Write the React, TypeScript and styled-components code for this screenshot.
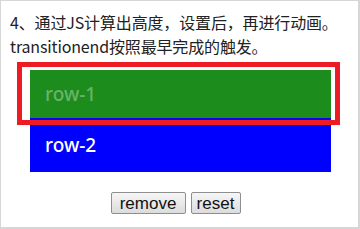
import { createGlobalStyle } from 'styled-components';
import styled from 'styled-components';

const GlobalStyle = createGlobalStyle`
  html, body {
    margin: 0;
    padding: 0;
    background: #fff;
  }
`;

const Page = styled.div`
  position: relative;
  box-sizing: border-box;
  width: 360px;
  height: 229px;
  border: 1px solid #d6d6d6;
  border-width: 1px 2px 2px 1px;
  font-family: "Noto Sans CJK SC", "Noto Sans", sans-serif;
`;

const Intro = styled.p`
  margin: 0;
  padding: 9px 6px 0 9px;
  font-size: 16px;
  line-height: 24px;
  color: #222;
  letter-spacing: -0.15px;
`;

const List = styled.div`
  margin: 12px 0 0 29px;
  width: 301px;
  display: flex;
  flex-direction: column;
`;

const Row = styled.div<{ $bg: string; $h: number; $fade?: boolean }>`
  height: ${(p) => p.$h}px;
  background: ${(p) => p.$bg};
  display: flex;
  align-items: center;
  padding-left: 15px;
  box-sizing: border-box;
  font-family: "Noto Sans", sans-serif;
  font-size: 19px;
  font-weight: 500;
  color: ${(p) => (p.$fade ? 'rgba(255,255,255,0.35)' : '#fff')};
`;

const Highlight = styled.div`
  position: absolute;
  left: 16px;
  top: 61px;
  width: 323px;
  height: 63px;
  box-sizing: border-box;
  border: 5px solid #ed1c24;
  pointer-events: none;
`;

const Buttons = styled.div`
  margin-top: 20px;
  display: flex;
  justify-content: center;
  gap: 5px;
  padding-right: 8px;
`;

const Button = styled.button<{ $w: number }>`
  width: ${(p) => p.$w}px;
  font-family: "Liberation Sans", Arial, sans-serif;
  font-size: 17px;
  height: 22px;
  padding: 0;
  color: #111;
  background: linear-gradient(#f6f6f6, #dcdcdc);
  border: 1px solid #8e8e8e;
  border-radius: 2px;
  line-height: 19px;
`;

const App = () => {
  return (
    <>
      <GlobalStyle />
      <Page>
        <Intro>
          4、通过JS计算出高度，设置后，再进行动画。transitionend按照最早完成的触发。
        </Intro>
        <List>
          <Row $bg="#1c8c1c" $h={48} $fade>
            row-1
          </Row>
          <Row $bg="#0000ff" $h={54}>
            row-2
          </Row>
        </List>
        <Highlight />
        <Buttons>
          <Button $w={75}>remove</Button>
          <Button $w={50}>reset</Button>
        </Buttons>
      </Page>
    </>
  );
};

export default App;
